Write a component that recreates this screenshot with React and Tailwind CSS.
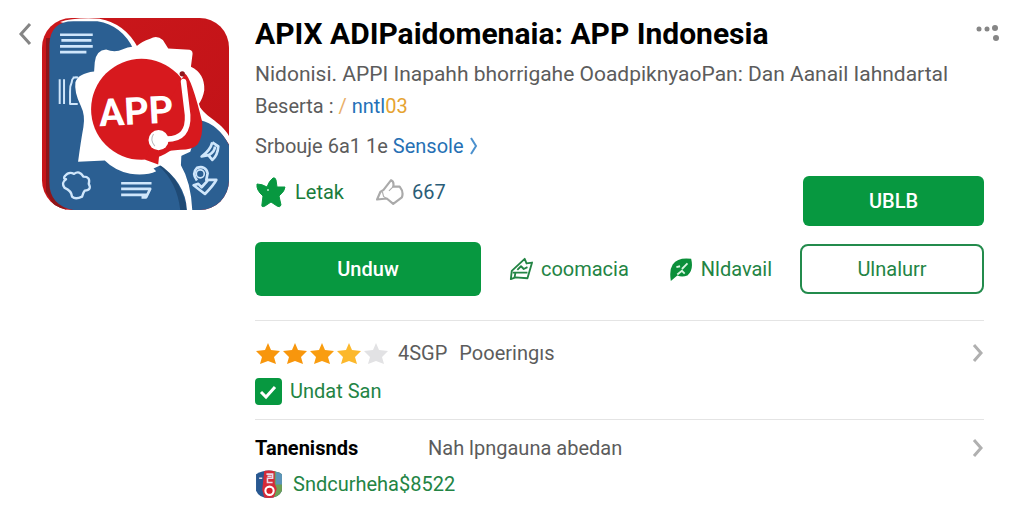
import { useState } from 'react';

const STARS = [
    { id: 1, color: 'text-[#f8960c]' },
    { id: 2, color: 'text-[#f8960c]' },
    { id: 3, color: 'text-[#f99d10]' },
    { id: 4, color: 'text-[#fcb82c]' },
    { id: 5, color: 'text-[#e2e2e4]' },
];

function AppLogo() {
    return (
        <svg viewBox="96 40 560 574" className="h-48 w-full" preserveAspectRatio="none" role="img" aria-label="APP">
            <defs>
                <clipPath id="logo-clip">
                    <rect x="96" y="40" width="560" height="574" rx="88" />
                </clipPath>
                <linearGradient id="logo-red" x1="0" y1="0" x2="1" y2="1">
                    <stop offset="0" stopColor="#cb171b" />
                    <stop offset="1" stopColor="#c01217" />
                </linearGradient>
            </defs>
            <g clipPath="url(#logo-clip)">
                <rect x="96" y="40" width="560" height="574" fill="url(#logo-red)" />
                <path d="M108 100H122V560L170 614H140L108 560Z" fill="#8f1519" />
                {/* left panel and its rim */}
                <path d="M150 52Q190 38 268 42Q346 56 384 130L370 138L180 60Z" fill="#fff" />
                <path d="M118 120Q120 50 190 50H262Q336 62 370 134L450 474Q522 520 532 614H190Q118 600 118 530Z" fill="#2b5f92" />
                <path d="M455 482Q516 530 530 614H510Q500 530 445 482Z" fill="#1f4a75" />
                {/* right panel */}
                <path d="M560 290C580 340 640 350 660 402V426C636 376 600 356 560 350Z" fill="#fff" />
                <path d="M510 420L570 346Q624 358 656 420V614H544Q544 560 508 492Z" fill="#2b5f92" />
                {/* seal */}
                <path d="M254 172Q258 136 288 134Q306 142 326 138Q352 126 380 124Q394 110 420 102Q440 90 458 106L474 131L538 135Q550 138 546 154L542 186Q584 206 582 256Q578 280 566 296L576 330L540 440L430 490L438 498Q410 512 360 506Q314 496 284 466L204 470Q212 410 220 366Q226 330 212 302Q192 262 196 232Q204 206 252 200Z" fill="#fff" />
                <path d="M438 436H514L512 480Q542 530 546 614H530Q526 530 442 474Z" fill="#fff" />
                <circle cx="394" cy="313" r="151" fill="#d7191e" />
                <path d="M524 206Q544 220 576 352Q578 398 562 418Q546 434 510 434L448 440L444 478L405 464L470 300Z" fill="#d7191e" />
                <path d="M520 230L532 330Q536 402 470 402H440" fill="none" stroke="#fff" strokeWidth="17" strokeLinecap="round" />
                <circle cx="516" cy="207" r="8" fill="#8f171c" />
                <circle cx="445" cy="405" r="30" fill="#fff" />
                <path d="M430 387Q418 405 434 423" fill="none" stroke="#b8b8bd" strokeWidth="3" />
                <text x="378" y="358" textAnchor="middle" transform="rotate(-3 378 330)" fill="#fff" fontFamily="Roboto, sans-serif" fontWeight="700" fontSize="114">APP</text>
                <g fill="none" stroke="#cfe6fb" strokeWidth="8" strokeLinecap="butt" strokeLinejoin="round">
                    <path d="M150 90H248M154 107H244M150 125H248M150 142H229" />
                    <path d="M149 223V297M162 223V297M204 218Q186 214 185 232Q179 244 180 260V297H203M188 218H202" strokeWidth="6" />
                    <path d="M165 512Q176 498 192 506Q208 494 220 514Q242 514 236 536Q246 554 224 556Q220 560 216 574Q196 584 186 574Q184 556 164 548Q152 532 168 522Q158 520 165 512Z" strokeWidth="7" />
                    <path d="M333 534H424M333 551H420L408 576H394M333 569H410" />
                    <path d="M606 412Q600 436 574 454L594 450L606 464Q622 452 624 424L606 412M614 424Q614 438 596 450" />
                    <path d="M560 526Q544 504 560 488Q586 480 592 504L588 524L618 524Q610 540 584 566L550 540L564 536L574 546L592 526" />
                    <circle cx="570" cy="506" r="12" strokeWidth="5" />
                </g>
            </g>
        </svg>
    );
}

function Star({ className }) {
    return (
        <svg viewBox="0 0 27 27" className={`size-[27px] ${className}`} fill="currentColor" aria-hidden="true">
            <path d="M13 3L16 10L25 11L19 17L21 24L13 21L5 24L7 17L1 11L10 10Z" />
        </svg>
    );
}

function ThumbIcon() {
    return (
        <svg viewBox="0 0 26 26" className="h-7 w-7" fill="none" stroke="#aaa" strokeWidth="2" strokeLinejoin="round" aria-hidden="true">
            <path d="M7 11L14 2Q17 3 16 8L22 8Q26 13 24 18L16 24L10 19L1 20L4 13Z" />
            <path d="M6 13L7 17L11 20M12 12L16 8" strokeWidth="1" />
        </svg>
    );
}

function ShareIcon() {
    return (
        <svg viewBox="0 0 26 26" className="h-6 w-6" fill="none" stroke="#238444" strokeWidth="2" strokeLinejoin="round" aria-hidden="true">
            <path d="M2 24L3 15L17 2L19 7L25 6L20 23L7 22Z" />
            <path d="M4 17H20M9 14L13 10L16 13L20 11M6 22L7 17" />
        </svg>
    );
}

function LeafIcon() {
    return (
        <svg viewBox="0 0 26 26" className="h-6 w-6" aria-hidden="true">
            <path d="M2 26Q0 14 4 8Q10 0 24 2Q27 14 20 20Q14 22 9 20Z" fill="#0b8f3a" />
            <path d="M8 11L12 10M14 13L20 7M9 19L14 15L17 18" fill="none" stroke="#d9f5e1" strokeWidth="2" />
        </svg>
    );
}

function GreenStar() {
    return (
        <svg viewBox="0 0 32 32" className="h-8 w-8" aria-hidden="true">
            <path d="M18 2Q20 1 21 4L22 11L30 11Q30 15 24 20L26 29Q25 32 22 30L16 26L10 30Q6 32 7 28L8 20Q1 14 2 8Q7 8 12 11Q14 5 18 2Z" fill="#079840" stroke="#079840" strokeLinejoin="round" />
            <circle cx="13" cy="14" r="1" fill="#b5edc9" />
        </svg>
    );
}

function Badge() {
    return (
        <svg viewBox="0 0 27 27" className="h-7 w-7" aria-hidden="true">
            <clipPath id="badge-clip">
                <path d="M1 4Q13 -3 26 4V20Q23 27 13 27Q4 27 1 20Z" />
            </clipPath>
            <g clipPath="url(#badge-clip)">
                <rect width="27" height="27" fill="#285891" />
                <path d="M18 0H27V27H18Z" fill="#6d9f55" />
                <path d="M20 2H27V14H20Z" fill="#5b94b9" />
                <path d="M9 0H19V13L21 18L18 27H9L7 19Z" fill="#d52a38" />
                <path d="M11 4H17V8H12V12H17M4 8H7M12 6H16" fill="none" stroke="#e7dcea" strokeWidth="1.5" />
                <circle cx="14" cy="20" r="4" fill="#d71f29" stroke="#fff" strokeWidth="2" />
            </g>
        </svg>
    );
}

function Chevron() {
    return (
        <svg viewBox="0 0 12 20" className="h-5 w-3" fill="none" stroke="#b0b0b0" strokeWidth="3" aria-hidden="true">
            <path d="M2 2L9 10L2 18" />
        </svg>
    );
}

export default function App() {
    const [checked, setChecked] = useState(true);

    return (
        <main className="flex bg-white pr-10 font-['Roboto',sans-serif] text-xl leading-8 text-[#5c5c5c]">
            <button type="button" aria-label="Back" className="mt-5 flex h-7 w-10 shrink-0 items-center justify-end pr-2">
                <svg viewBox="0 0 14 24" className="h-6 w-3.5" fill="none" stroke="#858585" strokeWidth="3">
                    <path d="M12 2L3 12L12 22" />
                </svg>
            </button>
            <div className="mt-4.5 mr-6.5 ml-0.5 w-[187px] shrink-0">
                <AppLogo />
            </div>

            <div className="min-w-0 flex-1 pt-4">
                <header className="flex items-start justify-between">
                    <h1 className="text-3xl leading-9 font-bold whitespace-nowrap text-black">APIX ADIPaidomenaia: APP Indonesia</h1>
                    <button type="button" aria-label="More" className="mt-2 -mr-4">
                        <svg viewBox="0 0 24 18" className="h-4.5 w-6" fill="#868686">
                            <circle cx="3" cy="5" r="2.5" />
                            <circle cx="11" cy="5" r="2.5" />
                            <circle cx="19" cy="4" r="3" />
                            <circle cx="20" cy="14" r="3" />
                        </svg>
                    </button>
                </header>
                <p className="mt-1.5 text-[21px] leading-8 whitespace-nowrap">Nidonisi. APPI Inapahh bhorrigahe OoadpiknyaoPan: Dan Aanail Iahndartal</p>
                <p>
                    Beserta : <span className="text-[#e9ae69]">/</span> <a href="#info" className="text-[#2470b8]">nntl</a>
                    <span className="text-[#e6a331]">03</span>
                </p>
                <p className="mt-2">
                    Srbouje 6a1 1e{' '}
                    <a href="#details" className="inline-flex items-center gap-1.5 text-[#2670b4]">
                        Sensole
                        <svg viewBox="0 0 8 18" className="h-4.5 w-2" fill="none" stroke="#4c91ce" strokeWidth="2">
                            <path d="M1 1L6 9L1 17" />
                        </svg>
                    </a>
                </p>

                <div className="mt-3.5 flex items-start justify-between">
                    <div className="flex items-center gap-8">
                        <span className="flex items-center gap-2 text-[#1a7c3c]"><GreenStar />Letak</span>
                        <span className="flex items-center gap-2 text-[#2b5d78]"><ThumbIcon />667</span>
                    </div>
                    <button type="button" className="h-[50px] w-[181px] rounded-md bg-[#079840] font-medium text-white">UBLB</button>
                </div>

                <div className="mt-4 flex items-center justify-between text-[#238444]">
                    <button type="button" className="h-[54px] w-[226px] rounded-md bg-[#079840] font-medium text-white">Unduw</button>
                    <button type="button" className="flex items-center gap-2"><ShareIcon />coomacia</button>
                    <button type="button" className="ml-3 flex items-center gap-2"><LeafIcon />Nldavail</button>
                    <button type="button" className="h-[50px] w-[184px] rounded-lg border-2 border-[#238b4c]">Ulnalurr</button>
                </div>

                <section className="mt-6 border-t border-[#e4e4e4] pt-4 pb-3">
                    <div className="flex items-center">
                        <div className="flex" role="img" aria-label="4 of 5 stars">
                            {STARS.map((star) => (
                                <Star key={star.id} className={star.color} />
                            ))}
                        </div>
                        <span className="ml-2">4SGP</span>
                        <span className="ml-3">Pooeringıs</span>
                        <a href="#ratings" aria-label="Ratings" className="ml-auto"><Chevron /></a>
                    </div>
                    <label className="mt-1.5 flex items-center gap-2 text-[#238444]">
                        <span className="relative size-[27px]">
                            <input
                                type="checkbox"
                                checked={checked}
                                onChange={(e) => setChecked(e.target.checked)}
                                className="peer block size-full appearance-none rounded border-2 border-[#079840] checked:bg-[#079840]"
                            />
                            <svg viewBox="0 0 27 27" className="pointer-events-none absolute inset-0 hidden peer-checked:block" fill="none" stroke="#fff" strokeWidth="3">
                                <path d="M6 14L11 19L20 9" />
                            </svg>
                        </span>
                        Undat San
                    </label>
                </section>

                <section className="border-t border-[#e4e4e4] pt-3">
                    <div className="flex items-center">
                        <h2 className="w-[173px] font-bold text-black">Tanenisnds</h2>
                        <p>Nah lpngauna abedan</p>
                        <a href="#reviews" aria-label="Reviews" className="ml-auto"><Chevron /></a>
                    </div>
                    <a href="#developer" className="mt-1 flex items-center gap-2.5 text-[#238444]">
                        <Badge />
                        Sndcurheha$8522
                    </a>
                </section>
            </div>
        </main>
    );
}
